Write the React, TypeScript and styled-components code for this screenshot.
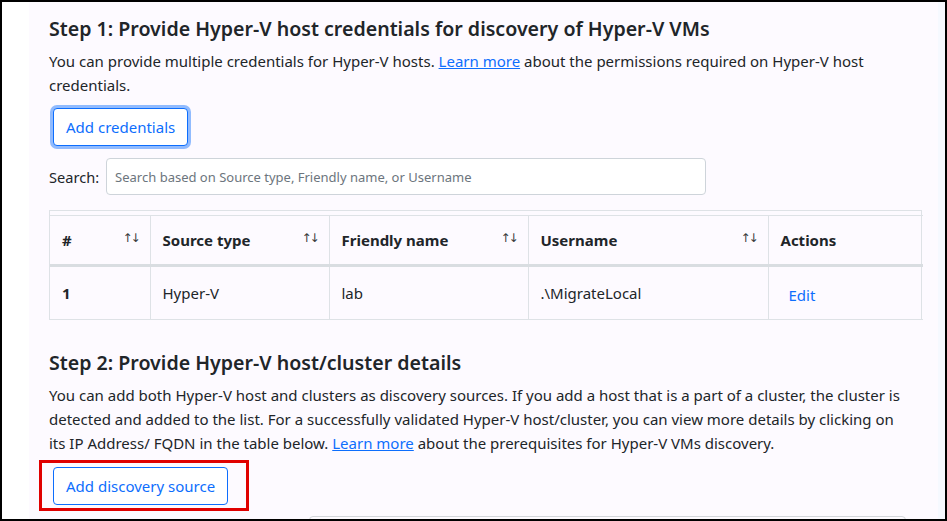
import React from "react";
import styled, { createGlobalStyle } from "styled-components";

const Global = createGlobalStyle`
  html, body { margin: 0; padding: 0; background: #fff; }
  * { box-sizing: border-box; }
  body { font-family: "Noto Sans", "Open Sans", sans-serif; color: #212529; }
`;

const Frame = styled.div`
  width: 947px;
  height: 521px;
  border: 2px solid #000;
  display: flex;
  overflow: hidden;
  background: #fff;
`;

const Gutter = styled.div`
  width: 27px;
  flex: none;
  background: #fff;
`;

const EdgeStrip = styled.div`
  width: 7px;
  flex: none;
  background: #f6f9ff;
`;

const Panel = styled.main`
  flex: 1;
  background: #fdfaff;
  padding: 15px 16px 0 20px;
  display: flex;
  flex-direction: column;
  align-items: flex-start;
  min-width: 0;
`;

const Heading = styled.h2<{ $top?: number }>`
  margin: ${(p) => p.$top ?? 0}px 0 0;
  font-size: 19.6px;
  font-weight: 600;
  line-height: 24px;
  color: #212529;
`;

const Para = styled.p`
  margin: 8px 0 0;
  font-size: 15px;
  line-height: 24px;
  color: #212529;
  width: 100%;
`;

const Link = styled.a`
  color: #0d6efd;
  text-decoration: underline;
`;

const OutlineButton = styled.button<{ $focused?: boolean }>`
  font-family: inherit;
  font-size: 15px;
  line-height: 24px;
  padding: 6px 12px;
  color: #0d6efd;
  background: #fff;
  border: 1px solid #0d6efd;
  border-radius: 4px;
  cursor: pointer;
  box-shadow: ${(p) => (p.$focused ? "0 0 0 3px rgba(13,110,253,0.45)" : "none")};
`;

const FocusWrap = styled.div`
  margin: 11px 0 0 4px;
`;

const SearchRow = styled.div`
  display: flex;
  align-items: center;
  gap: 7px;
  margin-top: 12px;
`;

const SearchLabel = styled.label`
  font-size: 14.6px;
  color: #212529;
`;

const SearchInput = styled.input`
  width: 600px;
  height: 37px;
  border: 1px solid #ced4da;
  border-radius: 4px;
  padding: 0 8px;
  font-family: inherit;
  font-size: 13px;
  background: #fff;
  &::placeholder { color: #6c757d; }
`;

const TableWrap = styled.div`
  width: 100%;
  margin-top: 15px;
  border: 1px solid #dee2e6;
  border-bottom: none;
  padding-top: 4px;
`;

const Table = styled.table`
  width: 100%;
  border-collapse: collapse;
  table-layout: fixed;
`;

const Th = styled.th<{ $w: number }>`
  width: ${(p) => p.$w}px;
  height: 50px;
  padding: 0 9px 0 12px;
  text-align: left;
  font-size: 15px;
  font-weight: 700;
  border: 1px solid #dee2e6;
  border-bottom: 3px solid #d9dde1;
  &:first-child { border-left: none; }
  &:last-child { border-right: none; }
`;

const ThInner = styled.div`
  display: flex;
  align-items: center;
  justify-content: space-between;
`;

const SortIcon = styled.span`
  font-family: "DejaVu Sans", sans-serif;
  font-size: 12px;
  font-weight: 400;
  color: #3a3a3a;
  letter-spacing: -2px;
  margin: -5px 2px 0 0;
`;

const Td = styled.td<{ $bold?: boolean }>`
  height: 54px;
  padding: 0 12px;
  font-size: 15px;
  font-weight: ${(p) => (p.$bold ? 700 : 400)};
  border: 1px solid #dee2e6;
  &:first-child { border-left: none; }
  &:last-child { border-right: none; }
`;

const EditLink = styled.a`
  display: inline-block;
  color: #0d6efd;
  font-size: 15px;
  padding: 3px 8px 0;
  text-decoration: none;
`;

const Annotation = styled.div`
  margin: 5px 0 0 -10px;
  border: 3px solid #e00000;
  padding: 4px 18px 3px 11px;
`;

const NextBox = styled.div`
  margin: 5px 0 0 260px;
  width: 597px;
  height: 40px;
  flex: none;
  border: 1px solid #d3d6da;
  border-radius: 4px;
  background: #fdfaff;
`;

const columns = [
  { label: "#", w: 100, sort: true },
  { label: "Source type", w: 179, sort: true },
  { label: "Friendly name", w: 199, sort: true },
  { label: "Username", w: 240, sort: true },
  { label: "Actions", w: 155, sort: false },
];

export default function App() {
  return (
    <>
      <Global />
      <Frame>
        <Gutter />
        <Panel>
          <Heading>Step 1: Provide Hyper-V host credentials for discovery of Hyper-V VMs</Heading>
          <Para>
            You can provide multiple credentials for Hyper-V hosts. <Link href="#">Learn more</Link> about the
            permissions required on Hyper-V host
            <br />
            credentials.
          </Para>
          <FocusWrap>
            <OutlineButton $focused>Add credentials</OutlineButton>
          </FocusWrap>
          <SearchRow>
            <SearchLabel>Search:</SearchLabel>
            <SearchInput placeholder="Search based on Source type, Friendly name, or Username" />
          </SearchRow>
          <TableWrap>
            <Table>
              <thead>
                <tr>
                  {columns.map((c) => (
                    <Th key={c.label} $w={c.w}>
                      <ThInner>
                        <span>{c.label}</span>
                        {c.sort && <SortIcon>↑↓</SortIcon>}
                      </ThInner>
                    </Th>
                  ))}
                </tr>
              </thead>
              <tbody>
                <tr>
                  <Td $bold>1</Td>
                  <Td>Hyper-V</Td>
                  <Td>lab</Td>
                  <Td>.\MigrateLocal</Td>
                  <Td>
                    <EditLink href="#">Edit</EditLink>
                  </Td>
                </tr>
              </tbody>
            </Table>
          </TableWrap>
          <Heading $top={31}>Step 2: Provide Hyper-V host/cluster details</Heading>
          <Para>
            You can add both Hyper-V host and clusters as discovery sources. If you add a host that is a part of a
            cluster, the cluster is
            <br />
            detected and added to the list. For a successfully validated Hyper-V host/cluster, you can view more
            details by clicking on
            <br />
            its IP Address/ FQDN in the table below. <Link href="#">Learn more</Link> about the prerequisites for
            Hyper-V VMs discovery.
          </Para>
          <Annotation>
            <OutlineButton>Add discovery source</OutlineButton>
          </Annotation>
          <NextBox />
        </Panel>
        <EdgeStrip />
      </Frame>
    </>
  );
}
